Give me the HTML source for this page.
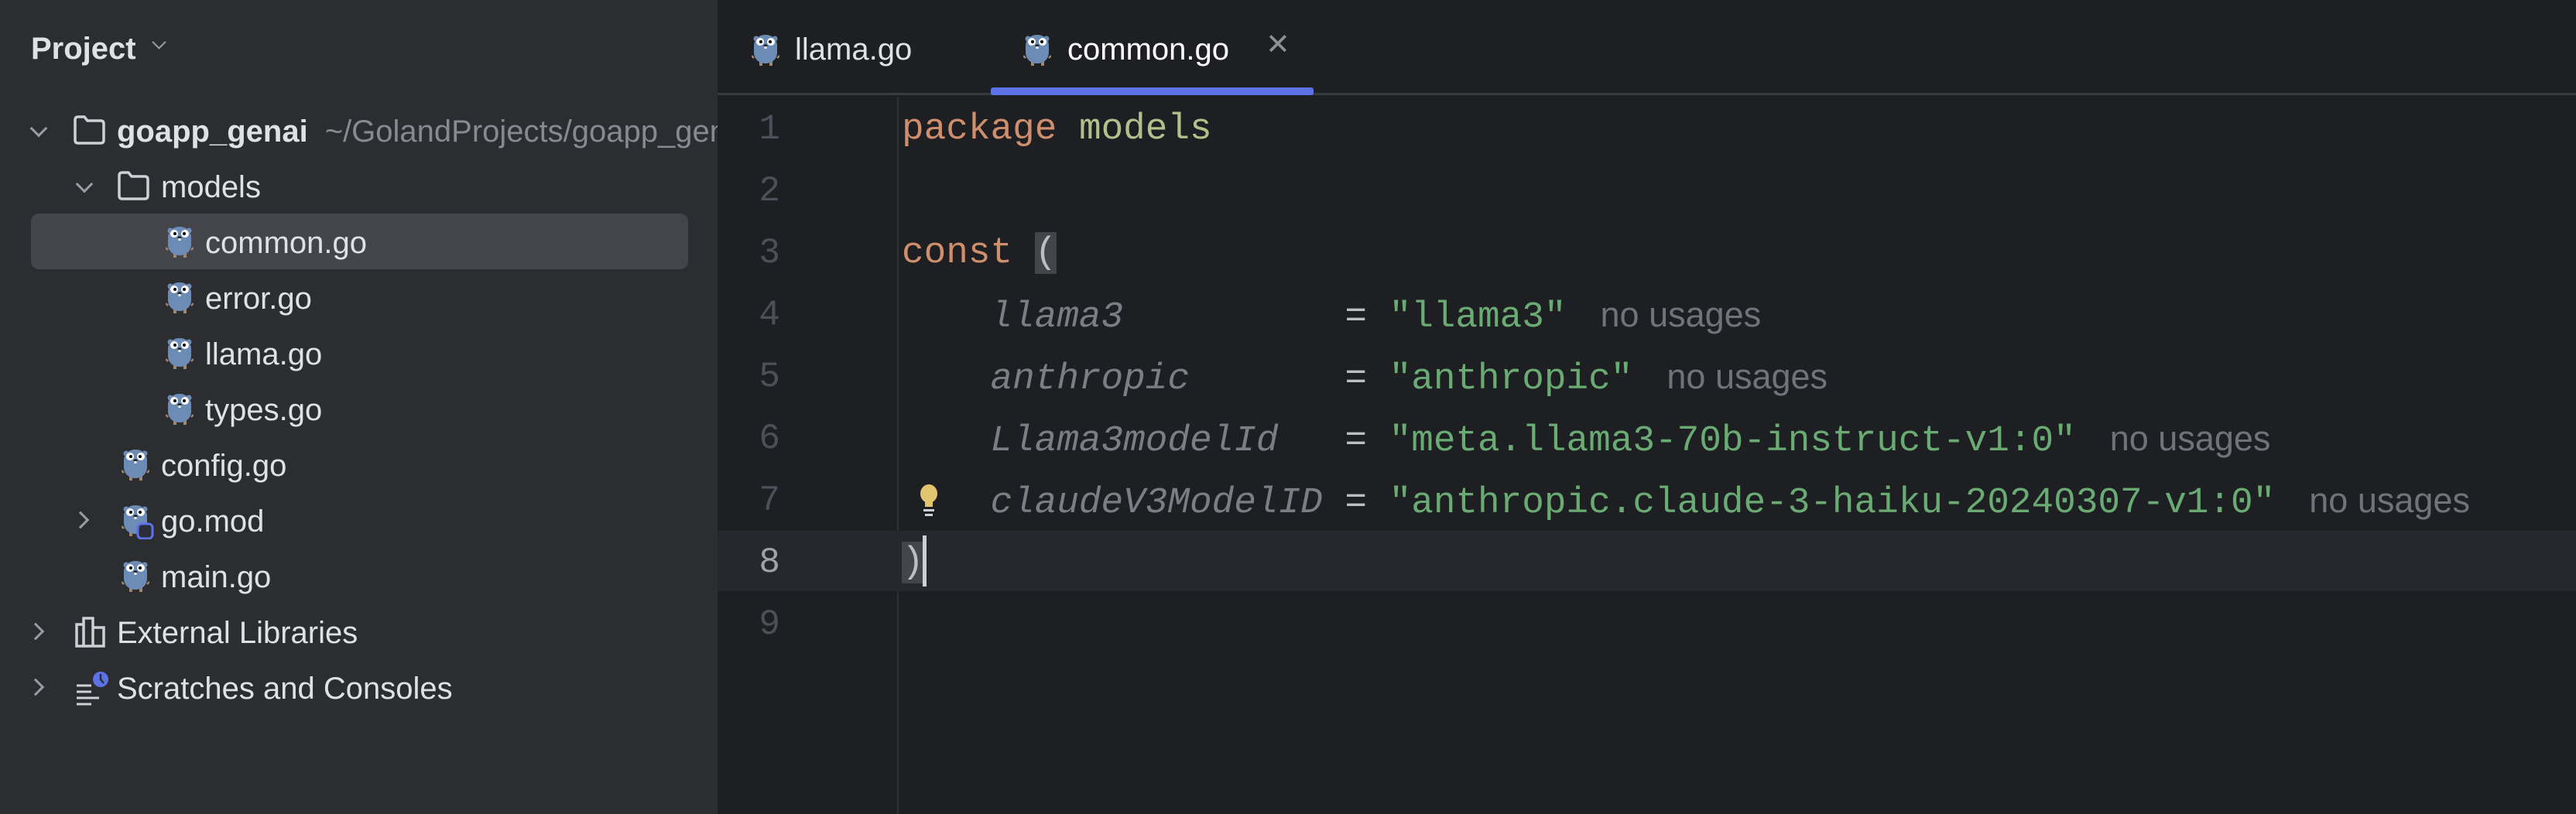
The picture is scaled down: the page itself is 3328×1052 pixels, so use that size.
<!DOCTYPE html>
<html><head><meta charset="utf-8"><style>
*{margin:0;padding:0;box-sizing:border-box}
body{width:3328px;height:1052px;background:#1e1f22;position:relative;overflow:hidden;font-family:"Liberation Sans",sans-serif;}
#side{position:absolute;left:0;top:0;width:927px;height:1052px;background:#2b2d30;overflow:hidden}
.t{position:absolute;color:#dfe1e5;font-size:40px;white-space:nowrap;line-height:72px;height:72px}
.ic{position:absolute}
.chev{position:absolute;width:16px;height:16px;border-right:3px solid #9a9da3;border-bottom:3px solid #9a9da3}
.down{transform:rotate(45deg)}
.right{transform:rotate(-45deg)}
#tabs{position:absolute;left:927px;top:0;right:0;height:123px;border-bottom:3px solid #393b40}
.code{position:absolute;left:1165px;font-family:"Liberation Mono",monospace;font-size:47.7px;line-height:80px;height:80px;white-space:pre;color:#bcbec4}
.ln{position:absolute;left:940px;width:68px;text-align:right;font-family:"Liberation Mono",monospace;font-size:46px;line-height:80px;color:#4b5059}
.k{color:#cf8e6d}.p{color:#b3c08b}.c{color:#7a7e85;font-style:italic}.s{color:#6aab73}
.h{font-family:"Liberation Sans",sans-serif;font-style:normal;color:#6f737a;font-size:45px;margin-left:44px}
</style></head><body>
<svg width="0" height="0" style="position:absolute"><defs>
<g id="go">
<circle cx="6" cy="7" r="3.5" fill="#6d8cb5"/><circle cx="30" cy="7" r="3.5" fill="#6d8cb5"/>
<path d="M3 32 L0 29" stroke="#a0876d" stroke-width="2.5"/><path d="M33 32 L36 29" stroke="#a0876d" stroke-width="2.5"/>
<rect x="10" y="36" width="4" height="6" fill="#a0876d"/><rect x="23" y="36" width="4" height="6" fill="#a0876d"/>
<rect x="3" y="2" width="30" height="37" rx="14" fill="#6d8cb5"/>
<circle cx="11" cy="11" r="5" fill="#fff"/><circle cx="25" cy="11" r="5" fill="#fff"/>
<circle cx="12" cy="11" r="2" fill="#000"/><circle cx="24" cy="11" r="2" fill="#000"/>
<ellipse cx="18" cy="16" rx="2.5" ry="1.8" fill="#222"/><rect x="16.5" y="17" width="3" height="3" fill="#fff"/>
</g>
<g id="fold"><path d="M3 8 Q3 4 7 4 L15 4 L19 9 L36 9 Q40 9 40 13 L40 34 Q40 38 36 38 L7 38 Q3 38 3 34 Z" fill="#2b2d30" stroke="#ced0d6" stroke-width="3.5"/></g>
</defs></svg>
<div id="side">
<div class="t" style="left:40px;top:27px;font-weight:bold;font-size:40px">Project</div>
<div class="chev down" style="left:199px;top:48px;width:13px;height:13px;border-width:2.5px"></div>

<div style="position:absolute;left:40px;top:276px;width:849px;height:72px;background:#43454a;border-radius:10px"></div>

<div class="chev down" style="left:42px;top:158px"></div>
<svg class="ic" style="left:94px;top:147px" width="44" height="42"><use href="#fold"/></svg>
<div class="t" style="left:151px;top:134px"><b>goapp_genai</b><span style="color:#868a91;margin-left:22px">~/GolandProjects/goapp_genai</span></div>

<div class="chev down" style="left:101px;top:230px"></div>
<svg class="ic" style="left:151px;top:219px" width="44" height="42"><use href="#fold"/></svg>
<div class="t" style="left:208px;top:206px">models</div>

<svg class="ic" style="left:214px;top:291px" width="36" height="42"><use href="#go"/></svg>
<div class="t" style="left:265px;top:278px">common.go</div>
<svg class="ic" style="left:214px;top:363px" width="36" height="42"><use href="#go"/></svg>
<div class="t" style="left:265px;top:350px">error.go</div>
<svg class="ic" style="left:214px;top:435px" width="36" height="42"><use href="#go"/></svg>
<div class="t" style="left:265px;top:422px">llama.go</div>
<svg class="ic" style="left:214px;top:507px" width="36" height="42"><use href="#go"/></svg>
<div class="t" style="left:265px;top:494px">types.go</div>

<svg class="ic" style="left:157px;top:579px" width="36" height="42"><use href="#go"/></svg>
<div class="t" style="left:208px;top:566px">config.go</div>
<div class="chev right" style="left:96px;top:664px"></div>
<svg class="ic" style="left:157px;top:651px" width="46" height="46"><use href="#go"/><rect x="21" y="26" width="19" height="19" rx="5" fill="#2b2d3a" stroke="#5c73e7" stroke-width="3"/></svg>
<div class="t" style="left:208px;top:638px">go.mod</div>
<svg class="ic" style="left:157px;top:723px" width="36" height="42"><use href="#go"/></svg>
<div class="t" style="left:208px;top:710px">main.go</div>

<div class="chev right" style="left:38px;top:808px"></div>
<svg class="ic" style="left:96px;top:795px" width="44" height="44"><path d="M3 12 H12 V40 H3 Z M12 4 H24 V40 H12 Z M24 16 H38 V40 H24 Z" fill="none" stroke="#ced0d6" stroke-width="3.5"/></svg>
<div class="t" style="left:151px;top:782px">External Libraries</div>
<div class="chev right" style="left:38px;top:880px"></div>
<svg class="ic" style="left:96px;top:866px" width="48" height="48"><path d="M3 20 H22 M3 28 H22 M3 36 H32 M3 44 H22" stroke="#ced0d6" stroke-width="3"/><circle cx="34" cy="12" r="10" fill="#5c73e7"/><path d="M34 5 V12 L38 17" stroke="#2b2d30" stroke-width="2.5" fill="none"/></svg>
<div class="t" style="left:151px;top:854px">Scratches and Consoles</div>
</div>

<div id="tabs">
<svg class="ic" style="left:44px;top:43px" width="36" height="42"><use href="#go"/></svg>
<div class="t" style="left:100px;top:28px;color:#dfe1e5">llama.go</div>
<svg class="ic" style="left:395px;top:43px" width="36" height="42"><use href="#go"/></svg>
<div class="t" style="left:452px;top:28px;color:#ffffff">common.go</div>
<div class="t" style="left:708px;top:22px;color:#8c8f94;font-size:38px">✕</div>
<div style="position:absolute;left:353px;top:113px;width:417px;height:10px;background:#5c73e7;border-radius:3px"></div>
</div>

<div style="position:absolute;left:1159px;top:126px;width:2px;height:926px;background:#2f3136"></div>
<div style="position:absolute;left:927px;top:686px;right:0;height:78px;background:#26282e"></div>

<div class="ln" style="top:127px">1</div>
<div class="ln" style="top:207px">2</div>
<div class="ln" style="top:287px">3</div>
<div class="ln" style="top:367px">4</div>
<div class="ln" style="top:447px">5</div>
<div class="ln" style="top:527px">6</div>
<div class="ln" style="top:607px">7</div>
<div class="ln" style="top:687px;color:#a1a3ab">8</div>
<div class="ln" style="top:767px">9</div>

<div class="code" style="top:127px"><span class="k">package</span> <span class="p">models</span></div>
<div class="code" style="top:287px"><span class="k">const</span> <span style="background:#43454a">(</span></div>
<div class="code" style="top:367px">    <span class="c">llama3</span>          = <span class="s">"llama3"</span><span class="h">no usages</span></div>
<div class="code" style="top:447px">    <span class="c">anthropic</span>       = <span class="s">"anthropic"</span><span class="h">no usages</span></div>
<div class="code" style="top:527px">    <span class="c">Llama3modelId</span>   = <span class="s">"meta.llama3-70b-instruct-v1:0"</span><span class="h">no usages</span></div>
<div class="code" style="top:607px">    <span class="c">claudeV3ModelID</span> = <span class="s">"anthropic.claude-3-haiku-20240307-v1:0"</span><span class="h">no usages</span></div>
<div class="code" style="top:687px"><span style="background:#43454a">)</span></div>
<div style="position:absolute;left:1192px;top:692px;width:5px;height:66px;background:#ced0d6"></div>
<svg class="ic" style="left:1185px;top:625px" width="30" height="44"><ellipse cx="15" cy="13" rx="11" ry="12" fill="#e0c56e"/><rect x="10" y="20" width="10" height="10" fill="#e0c56e"/><rect x="8" y="33" width="14" height="3" fill="#ced0d6"/><rect x="10" y="39" width="10" height="3" fill="#ced0d6"/></svg>
</body></html>
